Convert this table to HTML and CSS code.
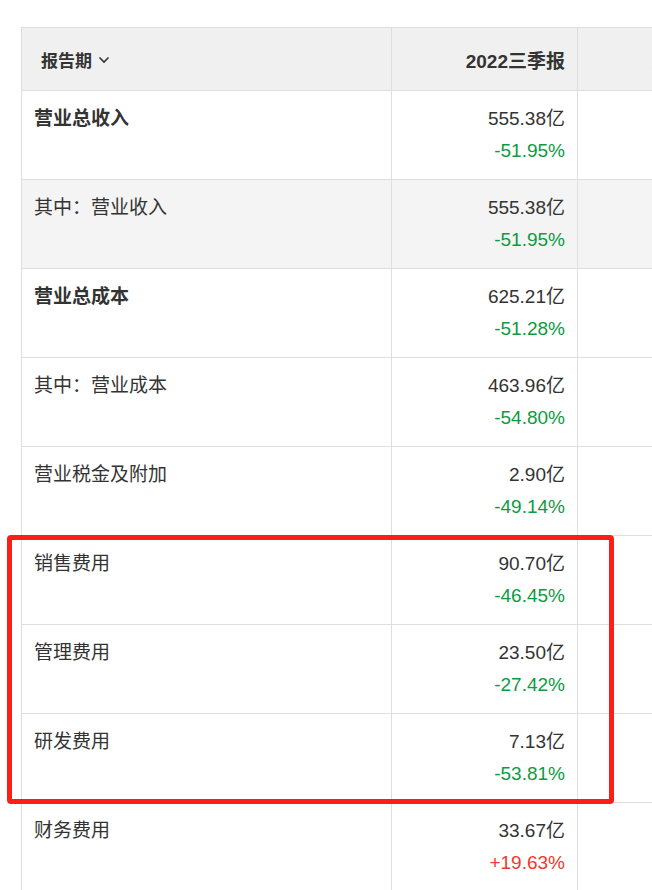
FILE: index.html
```html
<!DOCTYPE html>
<html lang="zh-CN">
<head>
    <meta charset="UTF-8">
    <title>利润表</title>
    <link rel="stylesheet" href="styles.css">
</head>
<body>
<div class="page">
    <table class="report">
        <thead>
            <tr>
                <th class="label-col">
                    <span class="period">报告期
                        <svg class="chev" viewBox="0 0 12 8" width="12" height="8"><path d="M1.5 1.5 L6 6 L10.5 1.5" fill="none" stroke="#333" stroke-width="1.6"/></svg>
                    </span>
                </th>
                <th class="num-col">2022三季报</th>
                <th class="num-col next">2021三季报</th>
            </tr>
        </thead>
        <tbody>
            <tr>
                <td class="label strong">营业总收入</td>
                <td class="num"><div>555.38亿</div><div class="down">-51.95%</div></td>
                <td class="num"></td>
            </tr>
            <tr class="shade">
                <td class="label">其中：营业收入</td>
                <td class="num"><div>555.38亿</div><div class="down">-51.95%</div></td>
                <td class="num"></td>
            </tr>
            <tr>
                <td class="label strong">营业总成本</td>
                <td class="num"><div>625.21亿</div><div class="down">-51.28%</div></td>
                <td class="num"></td>
            </tr>
            <tr>
                <td class="label">其中：营业成本</td>
                <td class="num"><div>463.96亿</div><div class="down">-54.80%</div></td>
                <td class="num"></td>
            </tr>
            <tr>
                <td class="label">营业税金及附加</td>
                <td class="num"><div>2.90亿</div><div class="down">-49.14%</div></td>
                <td class="num"></td>
            </tr>
            <tr>
                <td class="label">销售费用</td>
                <td class="num"><div>90.70亿</div><div class="down">-46.45%</div></td>
                <td class="num"></td>
            </tr>
            <tr>
                <td class="label">管理费用</td>
                <td class="num"><div>23.50亿</div><div class="down">-27.42%</div></td>
                <td class="num"></td>
            </tr>
            <tr>
                <td class="label">研发费用</td>
                <td class="num"><div>7.13亿</div><div class="down">-53.81%</div></td>
                <td class="num"></td>
            </tr>
            <tr>
                <td class="label">财务费用</td>
                <td class="num"><div>33.67亿</div><div class="up">+19.63%</div></td>
                <td class="num"></td>
            </tr>
        </tbody>
    </table>
    <!-- annotation drawn over the three expense rows -->
    <div class="mark"></div>
</div>
</body>
</html>
```

FILE: styles.css
```css
body {
    margin: 0;
    padding: 0;
    background: #fff;
    font-family: "Liberation Sans", "Noto Sans CJK SC", sans-serif;
    color: #333;
    overflow: hidden;
}
.page {
    position: relative;
    width: 652px;
    height: 890px;
    overflow: hidden;
    padding: 27px 0 0 21px;
    box-sizing: border-box;
}
.report {
    border-collapse: collapse;
    table-layout: fixed;
    width: 743px;
    font-size: 19px;
}
.report th,
.report td {
    border: 1px solid #dedede;
    vertical-align: top;
}
.report thead th {
    background: #f0f0f0;
    height: 62px;
    padding: 0 12px;
    vertical-align: middle;
    font-weight: bold;
}
.label-col {
    width: 345px;
    text-align: left;
}
.num-col {
    width: 161px;
    text-align: right;
}
.next {
    color: #e0a030;
}
.period {
    display: inline-flex;
    align-items: center;
    gap: 6px;
    margin-left: 7px;
    font-size: 17px;
}
.chev {
    margin-top: 2px;
}
.report td {
    height: 64px;
    padding: 12px;
    line-height: 32px;
}
.label {
    text-align: left;
}
.strong {
    font-weight: bold;
}
.num {
    text-align: right;
}
.shade td {
    background: #f4f4f4;
}
.down {
    color: #0d9b3f;
}
.up {
    color: #ee3a2c;
}
.mark {
    position: absolute;
    left: 7px;
    top: 535px;
    width: 597px;
    height: 259px;
    border: 5px solid #fe1d17;
    border-radius: 4px;
}
```
